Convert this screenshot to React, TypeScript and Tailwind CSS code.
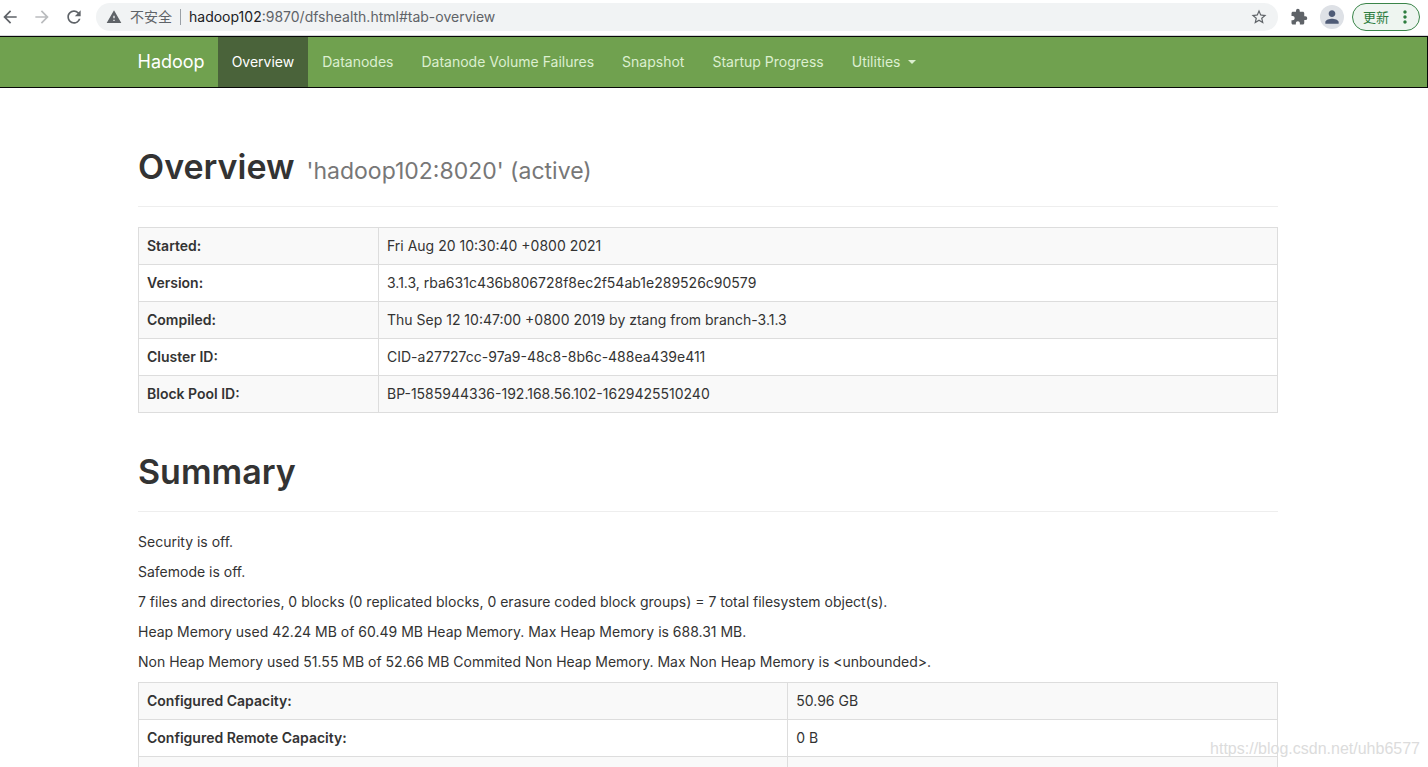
import React from 'react';
import { MdArrowBack, MdArrowForward, MdExtension, MdMoreVert, MdPerson, MdRefresh, MdStarBorder, MdWarning } from 'react-icons/md';

const navItems = ['Overview', 'Datanodes', 'Datanode Volume Failures', 'Snapshot', 'Startup Progress'];

const clusterInfo = [
  ['Started:', 'Fri Aug 20 10:30:40 +0800 2021'],
  ['Version:', '3.1.3, rba631c436b806728f8ec2f54ab1e289526c90579'],
  ['Compiled:', 'Thu Sep 12 10:47:00 +0800 2019 by ztang from branch-3.1.3'],
  ['Cluster ID:', 'CID-a27727cc-97a9-48c8-8b6c-488ea439e411'],
  ['Block Pool ID:', 'BP-1585944336-192.168.56.102-1629425510240'],
];

const summaryLines = [
  'Security is off.',
  'Safemode is off.',
  '7 files and directories, 0 blocks (0 replicated blocks, 0 erasure coded block groups) = 7 total filesystem object(s).',
  'Heap Memory used 42.24 MB of 60.49 MB Heap Memory. Max Heap Memory is 688.31 MB.',
  'Non Heap Memory used 51.55 MB of 52.66 MB Commited Non Heap Memory. Max Non Heap Memory is <unbounded>.',
];

const capacity = [
  ['Configured Capacity:', '50.96 GB'],
  ['Configured Remote Capacity:', '0 B'],
  ['', ''],
];

const BrowserBar = () => (
  <div className="flex h-9 items-center border-b border-[#d5d7da] bg-white pr-2 pb-px text-[#5f6368]">
    <button aria-label="Back" className="w-8"><MdArrowBack className="size-5" /></button>
    <button aria-label="Forward" className="w-8 text-[#babcbe]"><MdArrowForward className="size-5" /></button>
    <button aria-label="Reload" className="w-8"><MdRefresh className="size-5" /></button>
    <div className="flex h-7 flex-1 items-center rounded-full bg-[#f1f3f4] px-2.5">
      <MdWarning className="size-4" />
      <span className="ml-2 text-sm">不安全</span>
      <span className="mx-2 h-4 w-px bg-[#9aa0a6]" />
      <span className="flex-1 text-sm"><span className="text-[#202124]">hadoop102</span>:9870/dfshealth.html#tab-overview</span>
      <button aria-label="Bookmark"><MdStarBorder className="size-[18px]" /></button>
    </div>
    <button aria-label="Extensions" className="ml-3"><MdExtension className="size-[18px]" /></button>
    <button aria-label="Profile" className="ml-3 flex size-6 items-center justify-center rounded-full bg-[#dee1e6] text-[#4f5b76]">
      <MdPerson className="size-5" />
    </button>
    <button className="ml-2 flex h-7 items-center rounded-full border border-[#3a8549] bg-[#eef5f0] pr-1 pl-2.5 text-[13px] text-[#2d7d3f]">
      更新
      <MdMoreVert className="ml-1.5 size-5" />
    </button>
  </div>
);

const PageHeader = ({ title, detail }: { title: string; detail?: string }) => (
  <div className="mb-5 border-b border-[#eee] pb-[19px]">
    <h1 className="text-[34px] leading-10 font-semibold">
      {title}
      {detail && <small className="ml-3 text-[23px] leading-none font-normal text-[#777]">{detail}</small>}
    </h1>
  </div>
);

const InfoTable = ({ rows, labelWidth }: { rows: string[][]; labelWidth: string }) => (
  <table className="w-full table-fixed border-collapse">
    <tbody>
      {rows.map(([label, value], i) => (
        <tr key={i} className="h-[37px] odd:bg-[#f9f9f9]">
          <th scope="row" className={`border border-[#ddd] px-2 text-left font-semibold ${labelWidth}`}>{label}</th>
          <td className="border border-[#ddd] px-2">{value}</td>
        </tr>
      ))}
    </tbody>
  </table>
);

const App: React.FC = () => {
  return (
    <div className="relative h-screen overflow-hidden bg-white font-['Inter','Noto_Sans_CJK_SC',sans-serif] text-sm text-[#333]">
      <BrowserBar />

      <nav className="border border-l-0 border-[#080808] bg-[#70a14f] pr-3">
        <div className="mx-auto flex h-[50px] max-w-[1170px] items-stretch">
          <a href="#" className="flex items-center pr-[13px] pl-[15px] text-lg text-white">Hadoop</a>
          {navItems.map((item, i) => (
            <a
              key={item}
              href="#"
              className={`flex items-center px-3.5 ${i === 0 ? 'bg-[#4a633a] text-white' : 'text-[#dcefd0]'}`}
            >
              {item}
            </a>
          ))}
          <button className="flex items-center px-3.5 text-[#dcefd0]">
            Utilities
            <span className="ml-2 border-x-4 border-t-4 border-x-transparent border-t-[#dcefd0]" />
          </button>
        </div>
      </nav>

      <main className="pr-3">
        <div className="mx-auto max-w-[1170px] px-[15px] pt-[59px]">
          <PageHeader title="Overview" detail="'hadoop102:8020' (active)" />
          <InfoTable rows={clusterInfo} labelWidth="w-[240px]" />

          <div className="pt-[39px]">
            <PageHeader title="Summary" />
            {summaryLines.map((line) => (
              <p key={line} className="mb-2.5">{line}</p>
            ))}
            <InfoTable rows={capacity} labelWidth="w-[57%]" />
          </div>
        </div>
      </main>

      <div className="absolute right-2 bottom-1.5 font-['Liberation_Sans',sans-serif] text-base text-[#dcdcdc]">
        https://blog.csdn.net/uhb6577
      </div>
    </div>
  );
};

export default App;
